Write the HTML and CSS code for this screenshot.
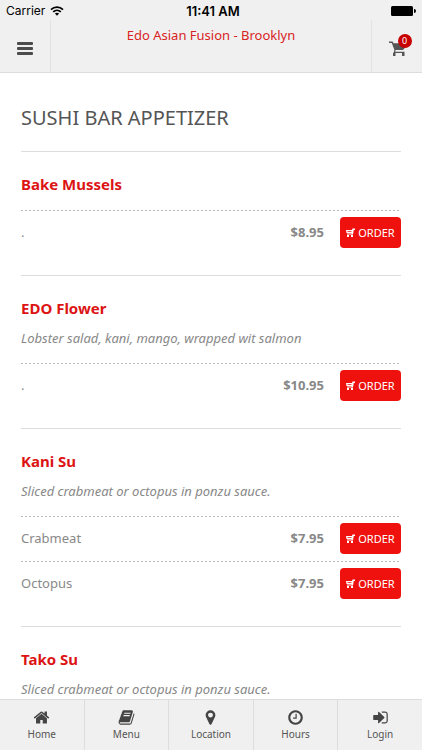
FILE: index.html
```html
<!DOCTYPE html>
<html lang="en">
<head>
    <meta charset="UTF-8">
    <meta name="viewport" content="width=device-width, initial-scale=1.0">
    <title>Edo Asian Fusion - Brooklyn</title>
    <link rel="stylesheet" href="styles.css">
</head>
<body>
    <!-- Shared cart icon for the order buttons -->
    <svg class="sprite" aria-hidden="true">
        <symbol id="order-cart" viewBox="0 0 18 18">
            <path d="M0 4h12l1-3h5v3h-2.500l-1.500 9H2v-2h9v-1H1zM3 6.500V8h8V6.500z" fill-rule="evenodd"/>
            <path d="M2 14h4v4H2zM10 14h4v4h-4z"/>
        </symbol>
    </svg>

    <!-- Header -->
    <header class="header">
        <div class="status-bar">
            <div class="carrier">
                <span>Carrier</span>
                <svg class="wifi" viewBox="0 0 14 10" aria-hidden="true">
                    <path d="M1 3.600a8.700 8.700 0 0 1 12 0M3.200 5.900a5.500 5.500 0 0 1 7.600 0" fill="none" stroke="#000" stroke-width="1.700"/>
                    <path d="M4.900 7.600a3.100 3.100 0 0 1 4.200 0L7 9.800z"/>
                </svg>
            </div>
            <span class="time">11:41 AM</span>
            <svg class="battery" viewBox="0 0 25 10" aria-hidden="true">
                <rect width="22" height="10" rx="1.500"/>
                <path d="M23 3q2 0 2 2t-2 2z"/>
            </svg>
        </div>
        <div class="nav">
            <button class="nav-btn nav-menu" aria-label="Open menu">
                <svg class="bars" viewBox="0 0 16 14" aria-hidden="true">
                    <rect width="16" height="3" rx="1"/>
                    <rect y="5" width="16" height="3" rx="1"/>
                    <rect y="10" width="16" height="3" rx="1"/>
                </svg>
            </button>
            <a href="#" class="nav-title">Edo Asian Fusion - Brooklyn</a>
            <button class="nav-btn nav-cart" aria-label="Cart">
                <span class="cart">
                    <svg class="cart-icon" viewBox="0 0 17 16" aria-hidden="true">
                        <path d="M0 .500h3.600l.9 1.700H16.500v4L14 9H6.600l-.4 1.700H15.500v1.300H4.500l.9-3L2.800 2H0z"/>
                        <path d="M4 12h2.500v3H4zM13 12h2.500v3H13z"/>
                    </svg>
                    <span class="badge">0</span>
                </span>
            </button>
        </div>
    </header>

    <!-- Menu List -->
    <main class="content">
        <h1>SUSHI BAR APPETIZER</h1>

        <section class="item">
            <h2>Bake Mussels</h2>
            <div class="row">
                <span class="option">.</span>
                <span class="price">$8.95</span>
                <button class="order"><svg class="order-icon" aria-hidden="true"><use href="#order-cart"/></svg>ORDER</button>
            </div>
        </section>

        <section class="item">
            <h2>EDO Flower</h2>
            <p>Lobster salad, kani, mango, wrapped wit salmon</p>
            <div class="row">
                <span class="option">.</span>
                <span class="price">$10.95</span>
                <button class="order"><svg class="order-icon" aria-hidden="true"><use href="#order-cart"/></svg>ORDER</button>
            </div>
        </section>

        <section class="item">
            <h2>Kani Su</h2>
            <p>Sliced crabmeat or octopus in ponzu sauce.</p>
            <div class="row">
                <span class="option">Crabmeat</span>
                <span class="price">$7.95</span>
                <button class="order"><svg class="order-icon" aria-hidden="true"><use href="#order-cart"/></svg>ORDER</button>
            </div>
            <div class="row">
                <span class="option">Octopus</span>
                <span class="price">$7.95</span>
                <button class="order"><svg class="order-icon" aria-hidden="true"><use href="#order-cart"/></svg>ORDER</button>
            </div>
        </section>

        <section class="item">
            <h2>Tako Su</h2>
            <p>Sliced crabmeat or octopus in ponzu sauce.</p>
        </section>
    </main>

    <!-- Bottom Tabs -->
    <nav class="tabs">
        <a href="#" class="tab">
            <svg viewBox="0 0 1792 1792" aria-hidden="true"><path d="M1472 992v480q0 26-19 45t-45 19h-384v-384h-256v384h-384q-26 0-45-19t-19-45v-480q0-1 .5-3t.5-3l575-474 575 474q1 2 1 6zm223-69l-62 74q-8 9-21 11h-3q-13 0-21-7l-692-577-692 577q-12 8-24 7-13-2-21-11l-62-74q-8-10-7-23.5t11-21.5l719-599q32-26 76-26t76 26l244 204v-195q0-14 9-23t23-9h192q14 0 23 9t9 23v408l219 182q10 8 11 21.5t-7 23.5z"/></svg>
            Home
        </a>
        <a href="#" class="tab">
            <svg viewBox="0 0 1792 1792" aria-hidden="true"><path d="M1703 478q40 57 18 129l-275 906q-19 64-76.5 107.5t-122.5 43.5h-923q-77 0-148.5-53.5t-99.5-131.5q-24-67-2-127 0-4 3-27t4-37q1-8-3-21.5t-3-19.5q2-11 8-21t16.5-23.5 16.5-23.5q23-38 45-91.5t30-91.5q3-10 .5-30t-.5-28q3-11 17-28t17-23q21-36 42-92t25-90q1-9-2.500-32t.5-28q4-13 22-30.500t22-22.500q19-26 42.500-84.500t27.500-96.500q1-8-3-25.500t-2-26.500q2-8 9-18t18-23 17-21q8-12 16.500-30.500t15-35 16-36 19.500-32 26.500-23.500 36-11.500 47.500 5.500l-1 3q38-9 51-9h761q74 0 114 56t18 130l-274 906q-36 119-71.500 153.500t-128.500 34.500h-869q-27 0-38 15-11 16-1 43 24 70 144 70h923q29 0 56-15.500t35-41.500l300-987q7-22 5-57 38 15 59 43zm-1064 2q-4 13 2 22.500t20 9.500h608q13 0 25.500-9.500t16.500-22.500l21-64q4-13-2-22.500t-20-9.500h-608q-13 0-25.500 9.500t-16.500 22.500zm-83 256q-4 13 2 22.500t20 9.500h608q13 0 25.500-9.500t16.500-22.500l21-64q4-13-2-22.500t-20-9.500h-608q-13 0-25.500 9.500t-16.500 22.500z"/></svg>
            Menu
        </a>
        <a href="#" class="tab">
            <svg viewBox="0 0 1792 1792" aria-hidden="true"><path d="M1152 640q0-106-75-181t-181-75-181 75-75 181 75 181 181 75 181-75 75-181zm256 0q0 109-33 179l-364 774q-16 33-47.5 52t-67.5 19-67.5-19-46.5-52l-365-774q-33-70-33-179 0-212 150-362t362-150 362 150 150 362z"/></svg>
            Location
        </a>
        <a href="#" class="tab">
            <svg viewBox="0 0 1792 1792" aria-hidden="true"><path d="M1024 544v448q0 14-9 23t-23 9h-320q-14 0-23-9t-9-23v-64q0-14 9-23t23-9h224v-352q0-14 9-23t23-9h64q14 0 23 9t9 23zm416 352q0-148-73-273t-198-198-273-73-273 73-198 198-73 273 73 273 198 198 273 73 273-73 198-198 73-273zm224 0q0 209-103 385.5t-279.5 279.5-385.5 103-385.5-103-279.5-279.5-103-385.5 103-385.5 279.5-279.5 385.5-103 385.5 103 279.5 279.5 103 385.5z"/></svg>
            Hours
        </a>
        <a href="#" class="tab">
            <svg viewBox="0 0 1792 1792" aria-hidden="true"><path d="M1312 896q0 26-19 45l-544 544q-19 19-45 19t-45-19-19-45v-288h-448q-26 0-45-19t-19-45v-384q0-26 19-45t45-19h448v-288q0-26 19-45t45-19 45 19l544 544q19 19 19 45zm352-352v704q0 119-84.5 203.5t-203.5 84.5h-320q-13 0-22.5-9.5t-9.5-22.5q0-4-1-20t-.5-26.5 3-23.5 10-19.5 20.5-6.5h320q66 0 113-47t47-113v-704q0-66-47-113t-113-47h-312l-11.500-1-11.500-3-8-5.500-7-9-2-13.500q0-4-1-20t-.5-26.500 3-23.500 10-19.500 20.500-6.500h320q119 0 203.500 84.500t84.500 203.500z"/></svg>
            Login
        </a>
    </nav>
</body>
</html>
```
FILE: styles.css
```css
/* General Styles */
* {
    box-sizing: border-box;
}
body {
    display: flex;
    flex-direction: column;
    height: 100vh;
    margin: 0;
    font-family: "Noto Sans", "Open Sans", sans-serif;
    font-size: 13px;
    color: #888;
    background-color: #fff;
}
button {
    padding: 0;
    border: none;
    background: none;
    font-family: inherit;
    cursor: pointer;
}
a {
    text-decoration: none;
}
.sprite {
    display: none;
}

/* Header */
.header {
    flex: none;
    background-color: #f0f0f0;
    border-bottom: 1px solid #ddd;
}
.status-bar {
    display: grid;
    grid-template-columns: 1fr auto 1fr;
    align-items: center;
    height: 20px;
    padding: 2px 6px 0;
    font-family: Inter, sans-serif;
    font-size: 12px;
    line-height: 18px;
    color: #000;
}
.carrier {
    display: flex;
    align-items: center;
    gap: 5px;
}
.wifi {
    width: 14px;
    height: 10px;
}
.time {
    padding-left: 4px;
    font-size: 13px;
    font-weight: 600;
}
.battery {
    justify-self: end;
    width: 25px;
    height: 10px;
}
.nav {
    display: flex;
    height: 52px;
}
.nav-btn {
    display: flex;
    align-items: center;
    justify-content: center;
    width: 51px;
    padding-top: 5px;
}
.nav-menu {
    border-right: 1px solid #e2e2e2;
}
.nav-cart {
    border-left: 1px solid #e2e2e2;
}
.nav-title {
    flex: 1;
    padding-top: 5px;
    line-height: 20px;
    text-align: center;
    color: #d92323;
}
.bars {
    width: 16px;
    height: 14px;
    fill: #4c4c4c;
}
.cart {
    position: relative;
    display: flex;
}
.cart-icon {
    width: 17px;
    height: 16px;
    fill: #555;
}
.badge {
    position: absolute;
    top: -7px;
    right: -6px;
    width: 14px;
    height: 14px;
    border-radius: 50%;
    background-color: #c80000;
    color: #fff;
    font-size: 9px;
    line-height: 14px;
    text-align: center;
}

/* Menu List */
.content {
    flex: 1;
    min-height: 0;
    overflow-y: auto;
    scrollbar-width: none;
    padding: 0 21px;
}
h1 {
    margin: 0;
    padding: 29px 0 17px;
    font-size: 20px;
    font-weight: 400;
    line-height: 32px;
    color: #555;
}
.item {
    padding: 21px 0 20px;
    border-top: 1px solid #ddd;
}
h2 {
    margin: 0 0 15px;
    font-size: 15px;
    font-weight: 700;
    line-height: 22px;
    color: #dc1414;
}
.item p {
    margin: -6px 0 15px;
    font-style: italic;
    line-height: 20px;
}
.row {
    display: flex;
    align-items: center;
    height: 45px;
    padding-bottom: 1px;
    background: repeating-linear-gradient(to right, #bbb 0, #bbb 2px, transparent 2px, transparent 4px) top / 100% 1px no-repeat;
}
.option {
    flex: 1;
}
.price {
    margin-right: 16px;
    font-weight: 700;
}
.order {
    display: flex;
    align-items: center;
    justify-content: center;
    gap: 3px;
    width: 61px;
    height: 31px;
    border-radius: 4px;
    background-color: #ee110d;
    color: #fff;
    font-size: 11px;
}
.order-icon {
    width: 9px;
    height: 9px;
    fill: #fff;
}

/* Bottom Tabs */
.tabs {
    display: flex;
    flex: none;
    height: 51px;
    background-color: #f0f0f0;
    border-top: 1px solid #ddd;
}
.tab {
    display: flex;
    flex: 1;
    flex-direction: column;
    align-items: center;
    padding-top: 9px;
    font-size: 10px;
    line-height: 16px;
    color: #555;
}
.tab + .tab {
    border-left: 1px solid #ddd;
}
.tab svg {
    width: 17px;
    height: 17px;
    fill: #444;
}
```
